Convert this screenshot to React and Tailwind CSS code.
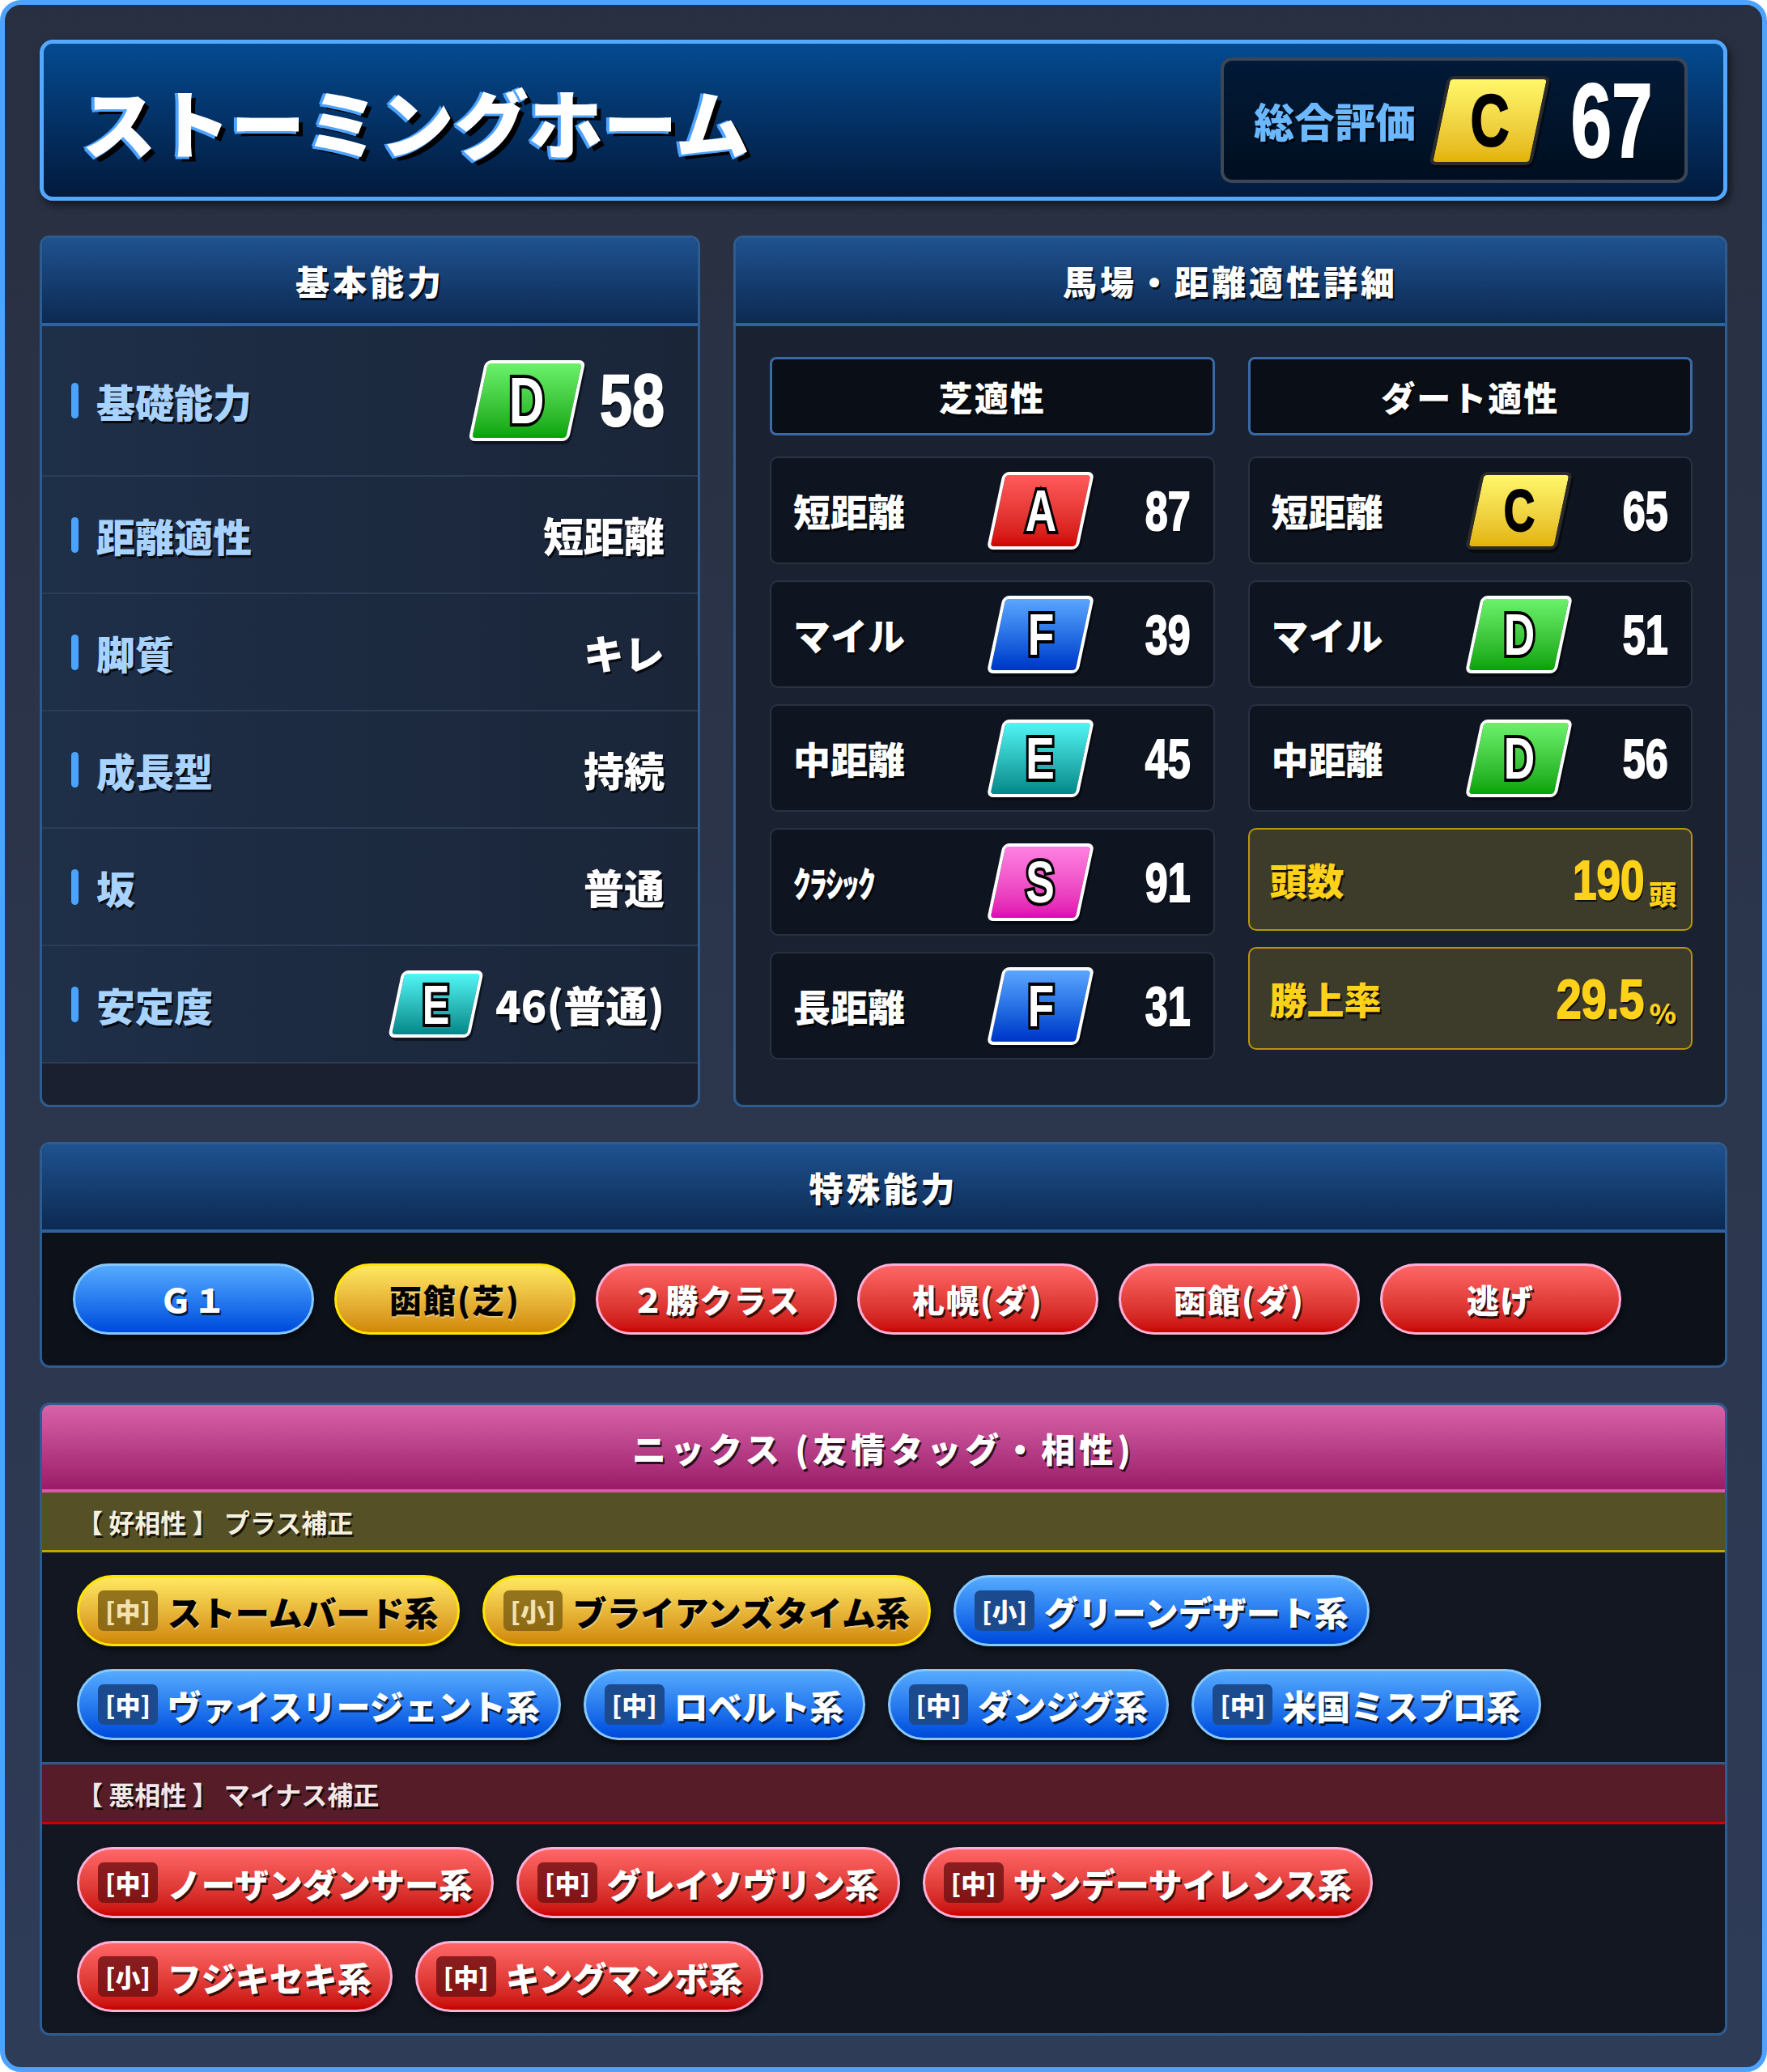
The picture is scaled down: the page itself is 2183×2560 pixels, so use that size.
import React from "react";

const jp = "font-['Noto_Sans_CJK_JP',sans-serif]";
const num = "font-['Liberation_Sans','Arial',sans-serif]";
const shadow = "[text-shadow:2px_3px_0_rgba(0,0,0,0.75)]";

const gradeColors = {
  S: "from-[#ff80e2] to-[#e000b0] border-white",
  A: "from-[#ff5a5a] to-[#d00000] border-white",
  C: "from-[#fff86a] to-[#e3b400] border-[#2b2b2b]",
  D: "from-[#6af26a] to-[#00a400] border-white",
  E: "from-[#50f6f6] to-[#008888] border-white",
  F: "from-[#5aa6ff] to-[#0032c8] border-white",
};

// condensed number: container keeps its width, text squeezed from the right edge
function Num({ children, box, text, scale }) {
  return (
    <span className={`flex justify-end ${box}`}>
      <span
        className={`shrink-0 origin-right font-bold leading-none [-webkit-text-stroke:2px_currentColor] ${num} ${text} ${scale}`}
      >
        {children}
      </span>
    </span>
  );
}

function Grade({ g, size, text }) {
  const dark = g === "C";
  return (
    <div
      className={`-skew-x-12 flex items-center justify-center rounded-[8px] border-[4px] bg-gradient-to-b shadow-[3px_4px_0_rgba(0,0,0,0.45)] ${gradeColors[g]} ${size}`}
    >
      <span className="skew-x-12">
        <span
          className={`inline-block scale-x-[0.74] font-bold leading-none ${num} ${text} ${
            dark
              ? "text-black [-webkit-text-stroke:2px_#000]"
              : "text-white [-webkit-text-stroke:8px_#000] [paint-order:stroke_fill]"
          }`}
        >
          {g}
        </span>
      </span>
    </div>
  );
}

function PanelHeader({ children }) {
  return (
    <div className="h-[109px] shrink-0 flex items-center justify-center bg-gradient-to-b from-[#1f5290] to-[#0c2a52] border-b-[4px] border-[#2f62a0]">
      <span className={`text-[42px] font-black tracking-[4px] text-white ${shadow}`}>{children}</span>
    </div>
  );
}

function StatRow({ label, children, tall }) {
  return (
    <div
      className={`flex items-center ${tall ? "h-[186px]" : "h-[145px]"} border-b-2 border-[#2c3c54] pl-[36px] pr-[41px]`}
    >
      <span className="w-[9px] h-[44px] rounded-full bg-[#4aa3ff]" />
      <span className={`ml-[22px] text-[48px] font-black text-[#a9d3ff] ${shadow}`}>{label}</span>
      <div className="ml-auto flex items-center">{children}</div>
    </div>
  );
}

function Cell({ label, g, value, small }) {
  return (
    <div className="h-[133px] flex items-center rounded-[10px] border-2 border-[#2a3242] bg-[#0e1420] pl-[27px] pr-[28px]">
      <span
        className={`w-[249px] font-black text-white ${shadow} ${small ? "text-[44px] tracking-[-2px]" : "text-[46px]"}`}
      >
        {label}
      </span>
      <Grade g={g} size="w-[113px] h-[96px]" text="text-[72px]" />
      <Num box="flex-1" text={`text-[68px] text-white ${shadow}`} scale="scale-x-[0.74]">
        {value}
      </Num>
    </div>
  );
}

function GoldBox({ label, value, unit, box, scale }) {
  return (
    <div className="h-[127px] flex items-center justify-between rounded-[10px] border-2 border-[#b8960a] bg-[#3d3b2a] pl-[25px] pr-[18px]">
      <span className={`text-[46px] font-black text-[#ffd21a] ${shadow}`}>{label}</span>
      <span className="flex items-end gap-[6px]">
        <Num box={box} text={`text-[68px] text-[#ffd21a] ${shadow}`} scale={scale}>
          {value}
        </Num>
        <span className={`text-[34px] leading-none font-black text-[#ffd21a] ${shadow}`}>{unit}</span>
      </span>
    </div>
  );
}

const pillTone = {
  blue: "bg-gradient-to-b from-[#55aaff] to-[#0048dd] border-[#86c8ff] text-white",
  gold: "bg-gradient-to-b from-[#ffe860] to-[#d08800] border-[#ffe400] text-black shadow-[0_0_16px_rgba(255,215,0,0.55)]",
  red: "bg-gradient-to-b from-[#ff6666] to-[#c80000] border-[#ffb0d8] text-white",
};

const tagTone = {
  blue: "bg-[#1c4a8e] text-white",
  gold: "bg-[#7a5c10]/80 text-[#f3e2b0]",
  red: "bg-[#6e0f12]/80 text-white",
};

function SkillPill({ tone, children }) {
  return (
    <div
      className={`w-[298px] h-[88px] flex items-center justify-center rounded-full border-[3px] shadow-[2px_5px_6px_rgba(0,0,0,0.5)] ${pillTone[tone]}`}
    >
      <span
        className={`text-[40px] font-black tracking-[2px] ${
          tone === "gold" ? "[text-shadow:1px_2px_0_rgba(255,255,255,0.4)]" : shadow
        }`}
      >
        {children}
      </span>
    </div>
  );
}

function NickPill({ tone, size, name }) {
  return (
    <div
      className={`h-[88px] flex items-center gap-[12px] rounded-full border-[3px] px-[23px] shadow-[2px_5px_6px_rgba(0,0,0,0.5)] ${pillTone[tone]}`}
    >
      <span className={`h-[50px] px-[9px] flex items-center rounded-[7px] text-[31px] font-black ${tagTone[tone]}`}>
        [{size}]
      </span>
      <span
        className={`text-[42px] font-black whitespace-nowrap ${
          tone === "gold" ? "[text-shadow:1px_2px_0_rgba(255,255,255,0.4)]" : shadow
        }`}
      >
        {name}
      </span>
    </div>
  );
}

const good = [
  [
    ["gold", "中", "ストームバード系"],
    ["gold", "小", "ブライアンズタイム系"],
    ["blue", "小", "グリーンデザート系"],
  ],
  [
    ["blue", "中", "ヴァイスリージェント系"],
    ["blue", "中", "ロベルト系"],
    ["blue", "中", "ダンジグ系"],
    ["blue", "中", "米国ミスプロ系"],
  ],
];

const bad = [
  [
    ["red", "中", "ノーザンダンサー系"],
    ["red", "中", "グレイソヴリン系"],
    ["red", "中", "サンデーサイレンス系"],
  ],
  [
    ["red", "小", "フジキセキ系"],
    ["red", "中", "キングマンボ系"],
  ],
];

function PillRows({ rows }) {
  return (
    <div className="flex flex-col gap-[28px] pl-[43px] pt-[28px] pb-[27px]">
      {rows.map((row, i) => (
        <div key={i} className="flex gap-[28px]">
          {row.map(([tone, size, name]) => (
            <NickPill key={name} tone={tone} size={size} name={name} />
          ))}
        </div>
      ))}
    </div>
  );
}

export default function App() {
  return (
    <div
      className={`w-[2183px] h-[2560px] rounded-[26px] border-[6px] border-[#4da3ff] bg-gradient-to-b from-[#282f40] to-[#2f3c58] px-[43px] pt-[43px] flex flex-col gap-[43px] ${jp}`}
    >
      {/* title */}
      <div className="h-[199px] shrink-0 flex items-center justify-between rounded-[16px] border-[5px] border-[#55a8ff] bg-gradient-to-b from-[#044b92] to-[#021a3c] pl-[47px] pr-[44px] shadow-[4px_6px_10px_rgba(0,0,0,0.5)]">
        <h1 className="text-[92px] font-black text-white leading-none [text-shadow:-4px_0_0_#4da3ff,-3px_3px_0_#4da3ff,5px_6px_0_#000]">
          ストーミングホーム
        </h1>
        <div className="w-[577px] h-[155px] flex items-center rounded-[14px] border-[4px] border-[#3c4654] bg-gradient-to-b from-[#021a38] to-[#000f20] pl-[37px]">
          <span className={`whitespace-nowrap text-[50px] font-black text-[#6cb8ff] ${shadow}`}>総合評価</span>
          <div className="ml-[28px]">
            <Grade g="C" size="w-[127px] h-[110px]" text="text-[90px]" />
          </div>
          <Num box="ml-[38px] w-[100px]" text={`text-[130px] text-white ${shadow}`} scale="scale-x-[0.7]">
            67
          </Num>
        </div>
      </div>

      {/* stats + aptitude */}
      <div className="h-[1077px] shrink-0 flex gap-[41px]">
        <div className="w-[816px] flex flex-col rounded-[12px] border-[3px] border-[#2f5c8f] overflow-hidden bg-[#1a2030]">
          <PanelHeader>基本能力</PanelHeader>
          <div className="bg-gradient-to-r from-[#1e2f48] to-[#1a2538]">
            <StatRow label="基礎能力" tall>
              <Grade g="D" size="w-[124px] h-[100px]" text="text-[82px]" />
              <Num box="ml-[26px] w-[82px]" text={`text-[90px] text-white ${shadow}`} scale="scale-x-[0.8]">
                58
              </Num>
            </StatRow>
            <StatRow label="距離適性">
              <span className={`text-[50px] font-black text-white ${shadow}`}>短距離</span>
            </StatRow>
            <StatRow label="脚質">
              <span className={`text-[50px] font-black text-white ${shadow}`}>キレ</span>
            </StatRow>
            <StatRow label="成長型">
              <span className={`text-[50px] font-black text-white ${shadow}`}>持続</span>
            </StatRow>
            <StatRow label="坂">
              <span className={`text-[50px] font-black text-white ${shadow}`}>普通</span>
            </StatRow>
            <StatRow label="安定度">
              <Grade g="E" size="w-[101px] h-[83px]" text="text-[68px]" />
              <span className={`ml-[23px] text-[52px] font-black text-white ${shadow}`}>46(普通)</span>
            </StatRow>
          </div>
        </div>

        <div className="flex-1 flex flex-col rounded-[12px] border-[3px] border-[#2f5c8f] overflow-hidden bg-[#1a2232]">
          <PanelHeader>馬場・距離適性詳細</PanelHeader>
          <div className="grid grid-cols-2 gap-[41px] pt-[38px] pl-[42px] pr-[40px]">
            <div className="flex flex-col gap-[20px]">
              <div className="h-[97px] mb-[6px] flex items-center justify-center rounded-[8px] border-[3px] border-[#3a6aa5] bg-[#0a0e16]">
                <span className={`text-[42px] font-black tracking-[2px] text-white ${shadow}`}>芝適性</span>
              </div>
              <Cell label="短距離" g="A" value="87" />
              <Cell label="マイル" g="F" value="39" />
              <Cell label="中距離" g="E" value="45" />
              <Cell label="ｸﾗｼｯｸ" g="S" value="91" small />
              <Cell label="長距離" g="F" value="31" />
            </div>
            <div className="flex flex-col gap-[20px]">
              <div className="h-[97px] mb-[6px] flex items-center justify-center rounded-[8px] border-[3px] border-[#3a6aa5] bg-[#0a0e16]">
                <span className={`text-[42px] font-black tracking-[2px] text-white ${shadow}`}>ダート適性</span>
              </div>
              <Cell label="短距離" g="C" value="65" />
              <Cell label="マイル" g="D" value="51" />
              <Cell label="中距離" g="D" value="56" />
              <GoldBox label="頭数" value="190" unit="頭" box="w-[88px]" scale="scale-x-[0.78]" />
              <GoldBox label="勝上率" value="29.5" unit="%" box="w-[112px]" scale="scale-x-[0.82]" />
            </div>
          </div>
        </div>
      </div>

      {/* special */}
      <div className="h-[279px] shrink-0 flex flex-col rounded-[12px] border-[3px] border-[#2f5c8f] overflow-hidden bg-[#0d111a]">
        <PanelHeader>特殊能力</PanelHeader>
        <div className="flex-1 flex items-center gap-[25px] pl-[38px]">
          <SkillPill tone="blue">Ｇ１</SkillPill>
          <SkillPill tone="gold">函館(芝)</SkillPill>
          <SkillPill tone="red">２勝クラス</SkillPill>
          <SkillPill tone="red">札幌(ダ)</SkillPill>
          <SkillPill tone="red">函館(ダ)</SkillPill>
          <SkillPill tone="red">逃げ</SkillPill>
        </div>
      </div>

      {/* nicks */}
      <div className="h-[782px] shrink-0 flex flex-col rounded-[12px] border-[3px] border-[#2f5c8f] overflow-hidden bg-[#121722]">
        <div className="h-[108px] shrink-0 flex items-center justify-center bg-gradient-to-b from-[#d862aa] to-[#9a1a68] border-b-[4px] border-[#d65aa5]">
          <span className={`text-[42px] font-black tracking-[5px] text-white ${shadow}`}>
            ニックス (友情タッグ・相性)
          </span>
        </div>
        <div className="h-[74px] shrink-0 flex items-center bg-[#555026] border-b-[3px] border-[#c8a000] pl-[43px]">
          <span className={`text-[32px] font-bold text-[#f4f0de] ${shadow}`}>【 好相性 】 プラス補正</span>
        </div>
        <PillRows rows={good} />
        <div className="h-[77px] shrink-0 flex items-center bg-[#561c28] border-t-[3px] border-[#2f5c8f] border-b-[3px] border-b-[#cc0000] pl-[43px]">
          <span className={`text-[32px] font-bold text-[#f4e6e6] ${shadow}`}>【 悪相性 】 マイナス補正</span>
        </div>
        <PillRows rows={bad} />
      </div>
    </div>
  );
}
